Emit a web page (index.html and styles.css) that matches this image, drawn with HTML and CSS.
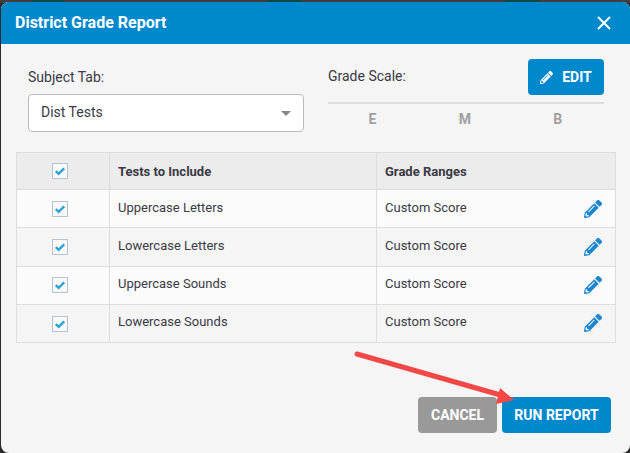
FILE: index.html
```html
<!DOCTYPE html>
<html>

<head>
    <meta charset="UTF-8">
    <title>District Grade Report</title>
    <link rel="stylesheet" href="styles.css">
</head>

<body>
    <svg class="icon-defs" width="0" height="0">
        <symbol id="pencil" viewBox="0 0 512 512">
            <path fill="currentColor"
                d="M497.9 142.1l-46.1 46.1c-4.7 4.7-12.3 4.7-17 0l-111-111c-4.7-4.7-4.7-12.3 0-17l46.1-46.1c18.7-18.7 49.1-18.7 67.9 0l60.1 60.1c18.8 18.7 18.8 49.1 0 67.9zM284.2 99.8L21.6 362.4.4 483.9c-2.9 16.4 11.4 30.6 27.8 27.8l121.5-21.3 262.6-262.6c4.7-4.7 4.7-12.3 0-17l-111-111c-4.8-4.7-12.4-4.7-17.1 0zM124.1 339.9c-5.5-5.5-5.5-14.3 0-19.8l154-154c5.5-5.5 14.3-5.5 19.8 0s5.5 14.3 0 19.8l-154 154c-5.5 5.5-14.3 5.5-19.8 0zM88 424h48v36.3l-64.5 11.3-31.1-31.1L51.7 376H88v48z" />
        </symbol>
        <symbol id="check" viewBox="0 0 16 16">
            <path d="M3.2 8.2l3.2 3 6.4-6.2" fill="none" stroke="currentColor" stroke-width="2.8" />
        </symbol>
    </svg>

    <div class="modal">
        <div class="modal-header">
            <h1>District Grade Report</h1>
            <svg class="close-icon" viewBox="0 0 16 16" fill="none" stroke="currentColor" stroke-width="2">
                <path d="M2 2l12 12M14 2L2 14" />
            </svg>
        </div>

        <div class="modal-body">
            <div class="options">
                <div class="subject-col">
                    <label class="field-label">Subject Tab:</label>
                    <div class="select-box">
                        <span class="select-text">Dist Tests</span>
                        <span class="select-caret"></span>
                    </div>
                </div>

                <div class="scale-col">
                    <div class="scale-top">
                        <label class="field-label">Grade Scale:</label>
                        <button class="btn btn-blue btn-edit">
                            <svg class="edit-icon"><use href="#pencil"></use></svg>
                            EDIT
                        </button>
                    </div>
                    <div class="scale-letters">
                        <span>E</span>
                        <span>M</span>
                        <span>B</span>
                    </div>
                </div>
            </div>

            <table class="tests-table">
                <colgroup>
                    <col class="col-check">
                    <col class="col-name">
                    <col class="col-range">
                    <col class="col-pencil">
                </colgroup>
                <tr class="head-row">
                    <th class="check-col"><span class="checkbox"><svg><use href="#check"></use></svg></span></th>
                    <th>Tests to Include</th>
                    <th colspan="2">Grade Ranges</th>
                </tr>
                <tr>
                    <td class="check-col"><span class="checkbox"><svg><use href="#check"></use></svg></span></td>
                    <td>Uppercase Letters</td>
                    <td class="range-col">Custom Score</td>
                    <td class="pencil-col"><svg class="row-pencil"><use href="#pencil"></use></svg></td>
                </tr>
                <tr>
                    <td class="check-col"><span class="checkbox"><svg><use href="#check"></use></svg></span></td>
                    <td>Lowercase Letters</td>
                    <td class="range-col">Custom Score</td>
                    <td class="pencil-col"><svg class="row-pencil"><use href="#pencil"></use></svg></td>
                </tr>
                <tr>
                    <td class="check-col"><span class="checkbox"><svg><use href="#check"></use></svg></span></td>
                    <td>Uppercase Sounds</td>
                    <td class="range-col">Custom Score</td>
                    <td class="pencil-col"><svg class="row-pencil"><use href="#pencil"></use></svg></td>
                </tr>
                <tr>
                    <td class="check-col"><span class="checkbox"><svg><use href="#check"></use></svg></span></td>
                    <td>Lowercase Sounds</td>
                    <td class="range-col">Custom Score</td>
                    <td class="pencil-col"><svg class="row-pencil"><use href="#pencil"></use></svg></td>
                </tr>
            </table>

            <div class="modal-footer">
                <button class="btn btn-gray">CANCEL</button>
                <button class="btn btn-blue btn-run">RUN REPORT</button>
            </div>
        </div>

        <!-- annotation drawn over the screenshot -->
        <svg class="arrow" viewBox="0 0 170 60" fill="#f44848">
            <path d="M3 3L150 45" stroke="#f44848" stroke-width="5" stroke-linecap="round" />
            <path d="M146 37L160 49 L142 53z" />
        </svg>
    </div>
</body>

</html>
```

FILE: styles.css
```css
:root {
    --blue: #0088cc;
    --panel: #f5f5f5;
    --border: #dddddd;
    --text: #3a3a44;
}

html,
body {
    height: 100%;
}

body {
    margin: 0;
    background-color: #2b2b2b;
    /* page behind the dialog, only a sliver shows at the top */
    background-image: linear-gradient(90deg,
            #3f3f3f 32px, #0b4a44 32px, #0b4a44 64px,
            #3f3f3f 64px, #3f3f3f 268px, #0b4a44 268px, #0b4a44 301px,
            #3f3f3f 301px, #3f3f3f 505px, #0b4a44 505px, #0b4a44 538px,
            #3f3f3f 538px);
    background-size: 100% 3px;
    background-repeat: no-repeat;
    color: var(--text);
    font-family: Roboto, "Liberation Sans", sans-serif;
    font-size: 13px;
    overflow: hidden;
}

.icon-defs {
    display: block;
    height: 0;
}

.modal {
    position: relative;
    box-sizing: border-box;
    margin: 2px 0 0 1px;
    height: 451px;
    background-color: var(--panel);
    border-radius: 8px;
    overflow: hidden;
}

.modal-header {
    display: flex;
    align-items: center;
    justify-content: space-between;
    box-sizing: border-box;
    height: 42px;
    padding: 0 18px 2px 14px;
    background-color: var(--blue);
    color: #fff;
}

.modal-header h1 {
    margin: 0;
    font-size: 16px;
    font-weight: 700;
}

.close-icon {
    width: 16px;
    height: 16px;
    margin-top: 2px;
}

.modal-body {
    padding: 15px 14px 0 15px;
}

.options {
    display: flex;
    gap: 24px;
    padding: 0 12px;
    height: 93px;
}

.subject-col,
.scale-col {
    width: 276px;
}

.field-label {
    display: block;
    font-size: 14px;
    line-height: 20px;
}

.subject-col .field-label {
    margin-top: 8px;
    margin-bottom: 7px;
}

.select-box {
    display: flex;
    align-items: center;
    justify-content: space-between;
    box-sizing: border-box;
    height: 38px;
    padding: 0 12px;
    background-color: #fff;
    border: 1px solid #bbbbbb;
    border-radius: 4px;
    font-size: 14px;
}

.select-text {
    margin-top: -2px;
}

.select-caret {
    width: 0;
    height: 0;
    border-left: 5px solid transparent;
    border-right: 5px solid transparent;
    border-top: 5px solid #888888;
}

.scale-top {
    display: flex;
    align-items: center;
    justify-content: space-between;
    padding-bottom: 7px;
    border-bottom: 2px solid var(--border);
}

.scale-top .field-label {
    margin-top: -2px;
}

.scale-letters {
    display: grid;
    grid-template-columns: 1fr 1fr 1fr;
    margin-top: 7px;
    margin-left: -2px;
    text-align: center;
    font-size: 14px;
    font-weight: 700;
    color: #a0a0a0;
}

.btn {
    display: inline-flex;
    align-items: center;
    justify-content: center;
    height: 36px;
    border: 0;
    border-radius: 4px;
    color: #fff;
    font-family: inherit;
    font-size: 14px;
    font-weight: 700;
}

.btn-blue {
    background-color: var(--blue);
}

.btn-gray {
    width: 79px;
    background-color: #999999;
}

.btn-edit {
    gap: 9px;
    width: 76px;
}

.btn-run {
    width: 109px;
}

.edit-icon {
    width: 13px;
    height: 13px;
}

.tests-table {
    width: 600px;
    border-collapse: collapse;
    table-layout: fixed;
}

.col-check {
    width: 93px;
}

.col-name {
    width: 267px;
}

.col-pencil {
    width: 50px;
}

.tests-table th,
.tests-table td {
    border: 1px solid var(--border);
    padding: 0 8px;
    text-align: left;
}

.tests-table th {
    height: 36px;
    background-color: #ececec;
    font-weight: 700;
}

.tests-table td {
    height: 34.25px;
    padding-bottom: 3px;
    background-color: var(--panel);
}

.tests-table tr:nth-child(even) td {
    background-color: #fbfbfb;
}

.tests-table .check-col {
    padding: 0 7px 0 0;
    text-align: center;
}

.tests-table .range-col {
    border-right: 0;
}

.tests-table .pencil-col {
    padding: 0 13px 0 0;
    border-left: 0;
}

.checkbox {
    display: inline-flex;
    box-sizing: border-box;
    width: 16px;
    height: 16px;
    background-color: #f8f8f8;
    border: 1px solid #b4c4d2;
    color: #2ea3d8;
    vertical-align: middle;
}

.checkbox svg {
    width: 14px;
    height: 14px;
}

.row-pencil {
    display: block;
    margin-left: auto;
    width: 18px;
    height: 18px;
    color: #1a86cf;
}

.modal-footer {
    display: flex;
    justify-content: flex-end;
    gap: 5px;
    margin-top: 54px;
    padding-right: 5px;
}

.arrow {
    position: absolute;
    left: 353px;
    top: 349px;
    width: 170px;
    height: 60px;
}
```
